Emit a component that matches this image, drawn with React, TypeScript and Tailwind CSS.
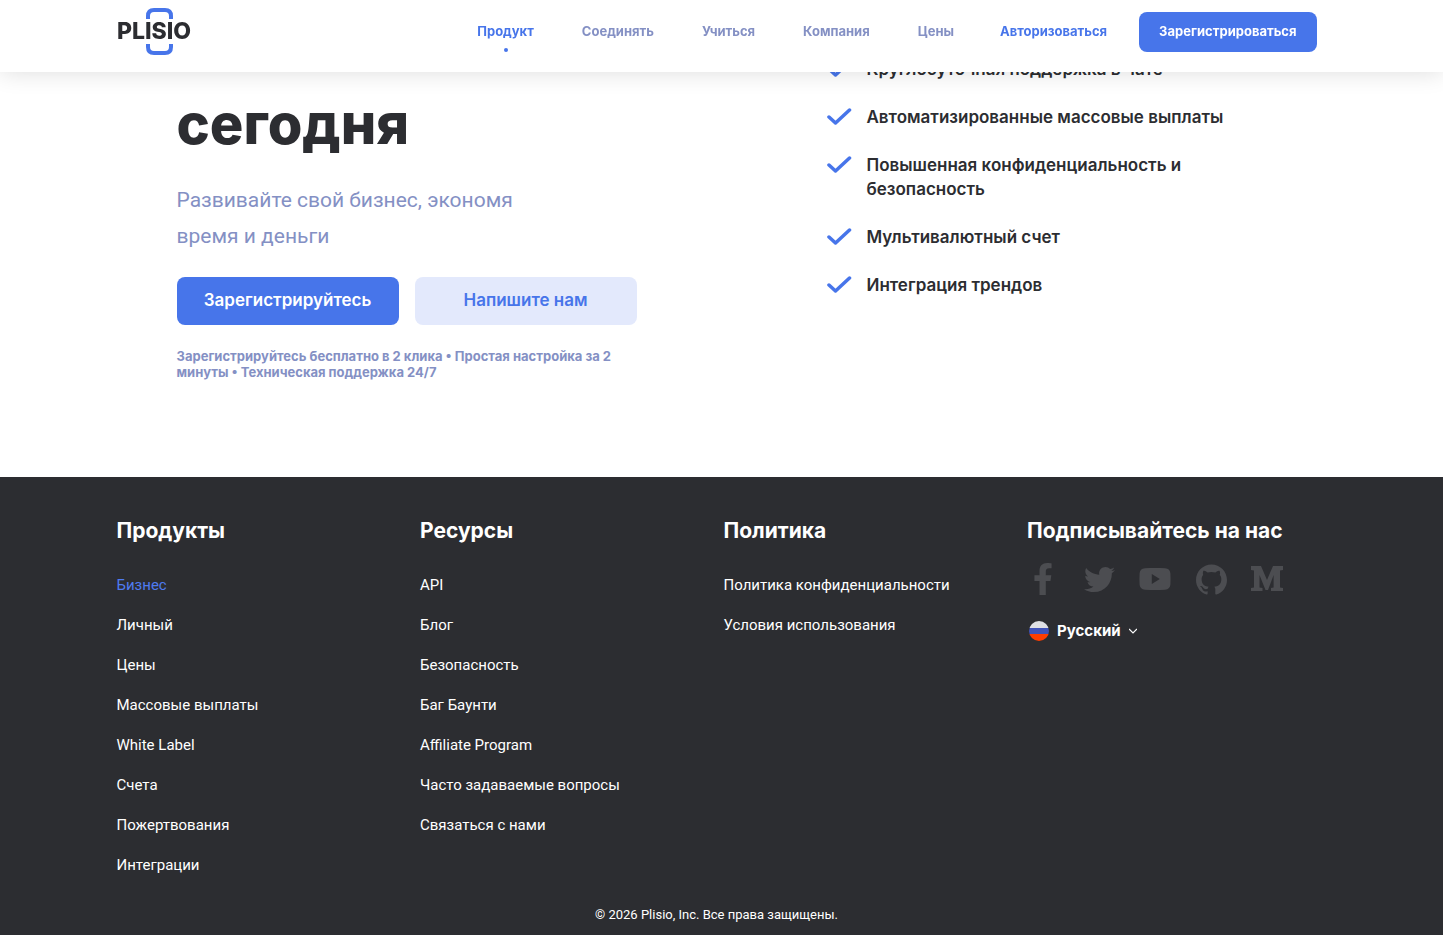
import { FaFacebookF, FaTwitter } from 'react-icons/fa';
import { SiGithub } from 'react-icons/si';
import { clsx } from 'clsx';
import type { ReactNode } from 'react';

interface NavItem {
  label: string;
  active?: boolean;
}

interface FooterColumn {
  title: string;
  links: NavItem[];
}

const navItems: NavItem[] = [
  { label: 'Продукт', active: true },
  { label: 'Соединять' },
  { label: 'Учиться' },
  { label: 'Компания' },
  { label: 'Цены' },
];

const features = [
  'Круглосуточная поддержка в чате',
  'Автоматизированные массовые выплаты',
  'Повышенная конфиденциальность и безопасность',
  'Мультивалютный счет',
  'Интеграция трендов',
];

const footerColumns: FooterColumn[] = [
  {
    title: 'Продукты',
    links: [
      { label: 'Бизнес', active: true },
      { label: 'Личный' },
      { label: 'Цены' },
      { label: 'Массовые выплаты' },
      { label: 'White Label' },
      { label: 'Счета' },
      { label: 'Пожертвования' },
      { label: 'Интеграции' },
    ],
  },
  {
    title: 'Ресурсы',
    links: [
      { label: 'API' },
      { label: 'Блог' },
      { label: 'Безопасность' },
      { label: 'Баг Баунти' },
      { label: 'Affiliate Program' },
      { label: 'Часто задаваемые вопросы' },
      { label: 'Связаться с нами' },
    ],
  },
  {
    title: 'Политика',
    links: [{ label: 'Политика конфиденциальности' }, { label: 'Условия использования' }],
  },
];

const socials: { name: string; icon: ReactNode }[] = [
  { name: 'Facebook', icon: <FaFacebookF size={32} /> },
  { name: 'Twitter', icon: <FaTwitter size={31} /> },
  { name: 'YouTube', icon: <YoutubeIcon /> },
  { name: 'GitHub', icon: <SiGithub size={31} /> },
  { name: 'Medium', icon: <MediumIcon /> },
];

function YoutubeIcon() {
  return (
    <svg width="32" height="32" viewBox="0 0 32 32" fill="currentColor" aria-hidden="true">
      <path
        fillRule="evenodd"
        d="M6 5.3c6-.5 14-.5 20 0 3.6.3 5.2 2.2 5.4 5.2.2 3.6.2 7.4 0 11-.2 3-1.8 4.9-5.4 5.2-6 .5-14 .5-20 0-3.6-.3-5.2-2.2-5.4-5.2-.2-3.6-.2-7.4 0-11C.8 7.5 2.4 5.6 6 5.3ZM12.8 11v10l8-5Z"
      />
    </svg>
  );
}

function MediumIcon() {
  return (
    <svg width="32" height="32" viewBox="0 0 32 32" fill="currentColor" aria-hidden="true">
      <path d="M0 3h10l6 14 6-14h10v4l-3 .6v16.8l3 .6v3H20v-3l2.6-.6V12L17 27h-2.5L8.500 12v12.4l3 .6v3H0v-3l3-.6V7.6L0 7Z" />
    </svg>
  );
}

function Logo() {
  return (
    <a href="#" aria-label="Plisio" className="shrink-0">
      <svg width="75" height="48" viewBox="0 0 75 48">
        <g fill="none" stroke="#4775ea" strokeWidth="4">
          <path d="M31 11V8q0-6 6-6h11q6 0 6 6v3" />
          <path d="M31 36v3q0 6 6 6h11q6 0 6-6v-3" />
        </g>
        <text x="0" y="31" fill="#2c2d31" fontSize="23" fontWeight="800" fontFamily="Inter, sans-serif">
          PLISIO
        </text>
      </svg>
    </a>
  );
}

function Header() {
  return (
    <header className="fixed inset-x-0 top-0 z-10 bg-white shadow-[0_0_24px_rgba(0,0,0,0.14)]">
      <div className="mx-auto flex h-[72px] max-w-[1210px] items-start justify-between pt-2 pr-[10px]">
        <Logo />
        <div className="flex items-start pt-1 text-[13px] leading-[38px] font-bold">
          <nav className="flex gap-12">
            {navItems.map((item) => (
              <a
                key={item.label}
                href="#"
                className={clsx('relative', item.active ? 'text-[#4775ea]' : 'text-[#8490c4]')}
              >
                {item.label}
                {item.active && (
                  <span className="absolute top-9 left-1/2 size-1 -translate-x-1/2 rounded-full bg-[#4775ea]" />
                )}
              </a>
            ))}
          </nav>
          <a href="#" className="ml-[46px] text-[#4775ea]">
            Авторизоваться
          </a>
          <button type="button" className="ml-8 flex h-10 rounded-lg bg-[#4775ea] px-5 text-white">
            Зарегистрироваться
          </button>
        </div>
      </div>
    </header>
  );
}

function Hero() {
  return (
    <section className="mx-auto grid max-w-[1090px] grid-cols-[650px_1fr] pt-[57px] pb-[97px]">
      <div className="w-[460px] pt-[35px]">
        <h2 className="text-[56px] leading-[64px] font-extrabold text-[#2c2d31]">сегодня</h2>
        <p className="mt-[26px] max-w-[360px] text-[21px] leading-9 text-[#8490c4] font-['Roboto',sans-serif]">
          Развивайте свой бизнес, экономя время и деньги
        </p>
        <div className="mt-[23px] grid grid-cols-2 gap-4 text-[17px] font-semibold">
          <button type="button" className="h-12 rounded-lg bg-[#4775ea] text-white">
            Зарегистрируйтесь
          </button>
          <button type="button" className="h-12 rounded-lg bg-[#e3e9fc] text-[#4775ea]">
            Напишите нам
          </button>
        </div>
        <p className="mt-[23px] text-[13px] leading-4 font-bold text-[#8490c4]">
          Зарегистрируйтесь бесплатно в 2 клика • Простая настройка за 2 минуты • Техническая поддержка 24/7
        </p>
      </div>

      <ul className="flex flex-col gap-6">
        {features.map((feature) => (
          <li key={feature} className="flex gap-[15px] text-[17px] leading-6 font-semibold text-[#2c2d31]">
            <svg width="25" height="24" viewBox="0 0 25 24" className="shrink-0" aria-hidden="true">
              <path
                d="M2 12 8.5 18 22.500 5"
                fill="none"
                stroke="#4775ea"
                strokeWidth="3.5"
                strokeLinecap="round"
                strokeLinejoin="round"
              />
            </svg>
            <span className="max-w-[360px]">{feature}</span>
          </li>
        ))}
      </ul>
    </section>
  );
}

function LanguageSelect() {
  return (
    <label className="mt-4 flex h-10 items-center gap-2 px-[2px]">
      <svg width="20" height="20" viewBox="0 0 20 20" className="rounded-full" aria-hidden="true">
        <path fill="#dfe0e4" d="M0 0h20v7H0z" />
        <path fill="#4153b8" d="M0 7h20v6H0z" />
        <path fill="#ff3d00" d="M0 13h20v7H0z" />
      </svg>
      <select aria-label="Язык" className="appearance-none bg-transparent text-[15px] leading-6 font-bold">
        <option>Русский</option>
      </select>
      <svg width="8" height="6" viewBox="0 0 8 6" className="pointer-events-none" aria-hidden="true">
        <path d="M0 1l4 4 4-4" fill="none" stroke="#fff" strokeWidth="1.2" />
      </svg>
    </label>
  );
}

function Footer() {
  return (
    <footer className="bg-[#2c2d31] text-white">
      <div className="mx-auto max-w-[1210px] pt-10 pb-[10px]">
        <div className="grid grid-cols-4 gap-1">
          {footerColumns.map((column) => (
            <div key={column.title}>
              <h3 className="text-[21px] leading-7 font-bold">{column.title}</h3>
              <ul className="mt-5 text-[15px] leading-10 font-['Roboto',sans-serif]">
                {column.links.map((link) => (
                  <li key={link.label}>
                    <a href="#" className={clsx(link.active && 'text-[#4f7bf0]')}>
                      {link.label}
                    </a>
                  </li>
                ))}
              </ul>
            </div>
          ))}
          <div>
            <h3 className="text-[21px] leading-7 font-bold">Подписывайтесь на нас</h3>
            <div className="mt-[18px] flex gap-6 text-[#4c4d51]">
              {socials.map((social) => (
                <a key={social.name} href="#" aria-label={social.name} className="grid size-8 place-items-center">
                  {social.icon}
                </a>
              ))}
            </div>
            <LanguageSelect />
          </div>
        </div>
        <p className="mt-5 pr-[10px] text-center text-[13px] leading-5 font-['Roboto',sans-serif]">
          © 2026 Plisio, Inc. Все права защищены.
        </p>
      </div>
    </footer>
  );
}

export default function App() {
  return (
    <div className="bg-white font-['Inter',sans-serif]">
      <Header />
      <main>
        <Hero />
      </main>
      <Footer />
    </div>
  );
}
